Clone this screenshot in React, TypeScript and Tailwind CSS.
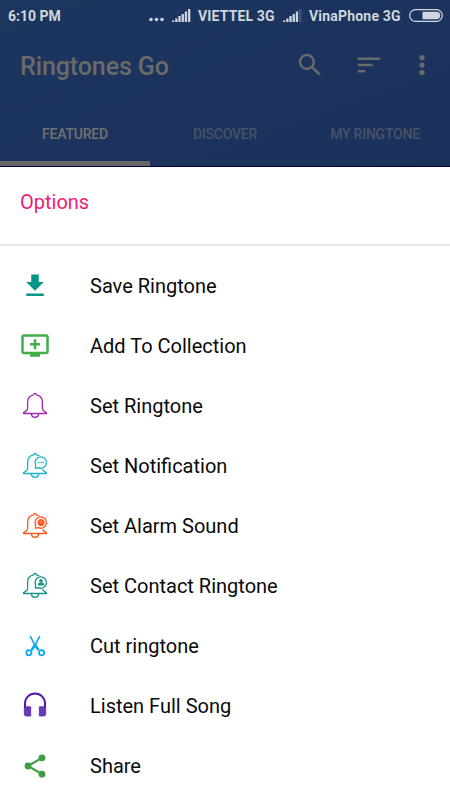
import type { ReactNode } from "react";

const options: { label: string; color: string; icon: ReactNode }[] = [
  {
    label: "Save Ringtone",
    color: "text-[#009688]",
    icon: <path fill="currentColor" d="M23.75 10.9h-5V3.4h-7.5v7.5h-5L15 19.8zM6.25 22.5V25h17.5v-2.5z" />,
  },
  {
    label: "Add To Collection",
    color: "text-[#43ad4a]",
    icon: (
      <path
        transform="translate(0 -.4) scale(1.25)"
        fill="currentColor"
        d="M21 3H3c-1.11 0-2 .89-2 2v12c0 1.1.89 2 2 2h5v2h8v-2h5c1.1 0 2-.9 2-2V5c0-1.11-.9-2-2-2zm0 14H3V5h18v12zm-5-7v2h-3v3h-2v-3H8v-2h3V7h2v3h3z"
      />
    ),
  },
  { label: "Set Ringtone", color: "text-[#9c27b0]", icon: <Bell /> },
  {
    label: "Set Notification",
    color: "text-[#16b5cb]",
    icon: (
      <Bell badge>
        <path stroke="currentColor" strokeWidth="1.4" strokeDasharray="1.4 .9" d="M18 11.5h6" />
      </Bell>
    ),
  },
  {
    label: "Set Alarm Sound",
    color: "text-[#ff5722]",
    icon: (
      <Bell badge>
        <circle cx="21" cy="11.5" r="3.5" fill="currentColor" />
        <path stroke="#fff" strokeWidth=".4" fill="none" d="M21.2 9.5v2.2h-1.5" />
      </Bell>
    ),
  },
  {
    label: "Set Contact Ringtone",
    color: "text-[#159588]",
    icon: (
      <Bell badge>
        <circle cx="21" cy="9.9" r="1.8" fill="currentColor" />
        <path fill="currentColor" d="M17.8 14.5v-1.1c0-1.2 1.2-1.9 3.2-1.9s3.2.7 3.2 1.9v1.1z" />
      </Bell>
    ),
  },
  {
    label: "Cut ringtone",
    color: "text-[#03a9f4]",
    icon: (
      <g fill="none" stroke="currentColor">
        <path strokeWidth="1.6" d="M10.2 5.2 15 14.4M19.8 5.2 15 14.4" />
        <path strokeWidth="2.5" d="m15 14-3.4 5M15 14l3.4 5" />
        <circle cx="8.9" cy="21.7" r="2.6" strokeWidth="1.7" />
        <circle cx="21.6" cy="21.7" r="2.6" strokeWidth="1.7" />
      </g>
    ),
  },
  {
    label: "Listen Full Song",
    color: "text-[#5714b0]",
    icon: (
      <>
        <path fill="none" stroke="currentColor" strokeWidth="2" d="M5 17v-4.7a10 9.8 0 0 1 20 0V17" />
        <path
          fill="#673ab7"
          stroke="currentColor"
          strokeWidth=".7"
          d="M4.3 15.8h6.4v9.2H6.3a2 2 0 0 1-2-2zM19.3 15.8h6.4V23a2 2 0 0 1-2 2h-4.4z"
        />
      </>
    ),
  },
  {
    label: "Share",
    color: "text-[#3b9e40]",
    icon: (
      <>
        <path fill="none" stroke="currentColor" strokeWidth="2.1" d="M22 6.8 8 15 22 23.2" />
        <g fill="currentColor">
          <circle cx="22" cy="6.8" r="3.4" />
          <circle cx="8" cy="15" r="3.4" />
          <circle cx="22" cy="23.2" r="3.4" />
        </g>
      </>
    ),
  },
];

// Outlined bell; the badge leaves a gap for the bubble on the right shoulder
function Bell({ badge = false, children }: { badge?: boolean; children?: ReactNode }) {
  return (
    <g>
      <g fill="none" stroke="currentColor" strokeWidth="1.3" strokeLinejoin="round">
        <path d="M13.7 3.8c0-2 2.6-2 2.6 0C20 4.4 22.4 7.2 22.4 11.2v6.3c0 2.2 1.6 2.6 4 4v1H3.6v-1c2.4-1.4 4-1.8 4-4v-6.3c0-4 2.4-6.8 6.1-7.4z" />
        <path d="M11.3 22.6c.3 4.9 7.1 4.9 7.4 0" />
      </g>
      {badge && (
        <>
          <circle cx="20.8" cy="11.5" r="6.9" fill="#fff" />
          <path
            fill="#fff"
            stroke="currentColor"
            strokeWidth="1.3"
            d="M15.5 17.2v-3.5a5.7 5.7 0 1 1 2.9 3z"
          />
        </>
      )}
      {children}
    </g>
  );
}

function Signal({ faded }: { faded: number }) {
  return (
    <svg viewBox="0 0 19 13" className="mb-px h-[13px] w-[19px] shrink-0" fill="currentColor">
      {[1.5, 3.5, 6, 8, 10.5, 13].map((h, i) => (
        <rect key={h} x={i * 3.2} y={13 - h} width="2.3" height={h} opacity={i > faded ? 0.2 : 1} />
      ))}
    </svg>
  );
}

function StatusBar() {
  return (
    <div className="flex h-[31px] items-center pt-px pr-[7px] pl-2 text-[14px] font-bold whitespace-nowrap text-[#d0d6df]">
      <span>6:10 PM</span>
      <svg viewBox="0 0 15 13" className="mb-px ml-auto h-[13px] w-[15px]" fill="currentColor">
        <circle cx="2" cy="10.5" r="1.8" />
        <circle cx="7.5" cy="10.5" r="1.8" />
        <circle cx="13" cy="10.5" r="1.8" />
      </svg>
      <div className="ml-2">
        <Signal faded={5} />
      </div>
      <span className="ml-[7px] w-[77px] tracking-[0.15px]">VIETTEL 3G</span>
      <div className="ml-2">
        <Signal faded={4} />
      </div>
      <span className="ml-[7px] w-[92px] tracking-[0.2px]">VinaPhone 3G</span>
      <svg viewBox="0 0 34 13" className="mb-px ml-2 h-[13px] w-[34px] shrink-0">
        <rect x=".7" y=".7" width="32.6" height="11.6" rx="5.8" fill="none" stroke="currentColor" strokeWidth="1.2" />
        <path fill="currentColor" d="M13.5 2.8h14a3.7 3.7 0 0 1 0 7.4h-14z" />
      </svg>
    </div>
  );
}

function AppBar() {
  return (
    <header className="flex h-[70px] items-center pr-[13px] pl-5 text-[#6a6a6a]">
      <h1 className="pt-0.5 text-[25px] font-medium tracking-[-0.1px]">Ringtones Go</h1>
      <svg viewBox="0 0 24 24" className="mb-0.5 ml-auto size-[30px]" fill="currentColor">
        <path d="M15.5 14h-.79l-.28-.27A6.471 6.471 0 0 0 16 9.5 6.5 6.5 0 1 0 9.5 16c1.61 0 3.09-.59 4.23-1.57l.27.28v.79l5 4.99L20.49 19l-4.99-5zm-6 0C7.01 14 5 11.99 5 9.5S7.01 5 9.5 5 14 7.01 14 9.5 11.99 14 9.5 14z" />
      </svg>
      <svg viewBox="0 0 24 24" className="mb-0.5 ml-[29px] size-[30px]" fill="currentColor">
        <path d="M3 18h6v-2H3v2zM3 6v2h18V6H3zm0 7h12v-2H3v2z" />
      </svg>
      <svg viewBox="0 0 24 24" className="mb-0.5 ml-[23px] size-[30px]" fill="currentColor">
        <circle cx="12" cy="6" r="2.1" />
        <circle cx="12" cy="12" r="2.1" />
        <circle cx="12" cy="18" r="2.1" />
      </svg>
    </header>
  );
}

export default function App() {
  return (
    <div className="flex h-[800px] w-[450px] flex-col overflow-hidden bg-white font-['Roboto',sans-serif]">
      <div className="h-[167px] border-b border-[#010143] bg-linear-to-br from-[#1d365e] to-[#1a315c]">
        <StatusBar />
        <AppBar />
        <nav className="grid h-[65px] grid-cols-3 text-center text-[14px] leading-[67px] font-medium tracking-[-0.22px] text-[#485266]">
          <span className="h-[65px] border-b-[5px] border-[#686868] text-[#727272]">FEATURED</span>
          <span>DISCOVER</span>
          <span>MY RINGTONE</span>
        </nav>
      </div>

      <h2 className="h-[79px] border-b-2 border-[#e7e7e7] pl-5 text-[20px] leading-[70px] text-[#ee1b70]">
        Options
      </h2>

      <ul className="pt-[10px]">
        {options.map(({ label, color, icon }) => (
          <li key={label} className="flex h-[60px] items-center gap-10 pl-5 text-[20px] text-[#0a0a0a]">
            <svg viewBox="0 0 30 30" className={`size-[30px] ${color}`}>
              {icon}
            </svg>
            <span>{label}</span>
          </li>
        ))}
      </ul>
    </div>
  );
}
